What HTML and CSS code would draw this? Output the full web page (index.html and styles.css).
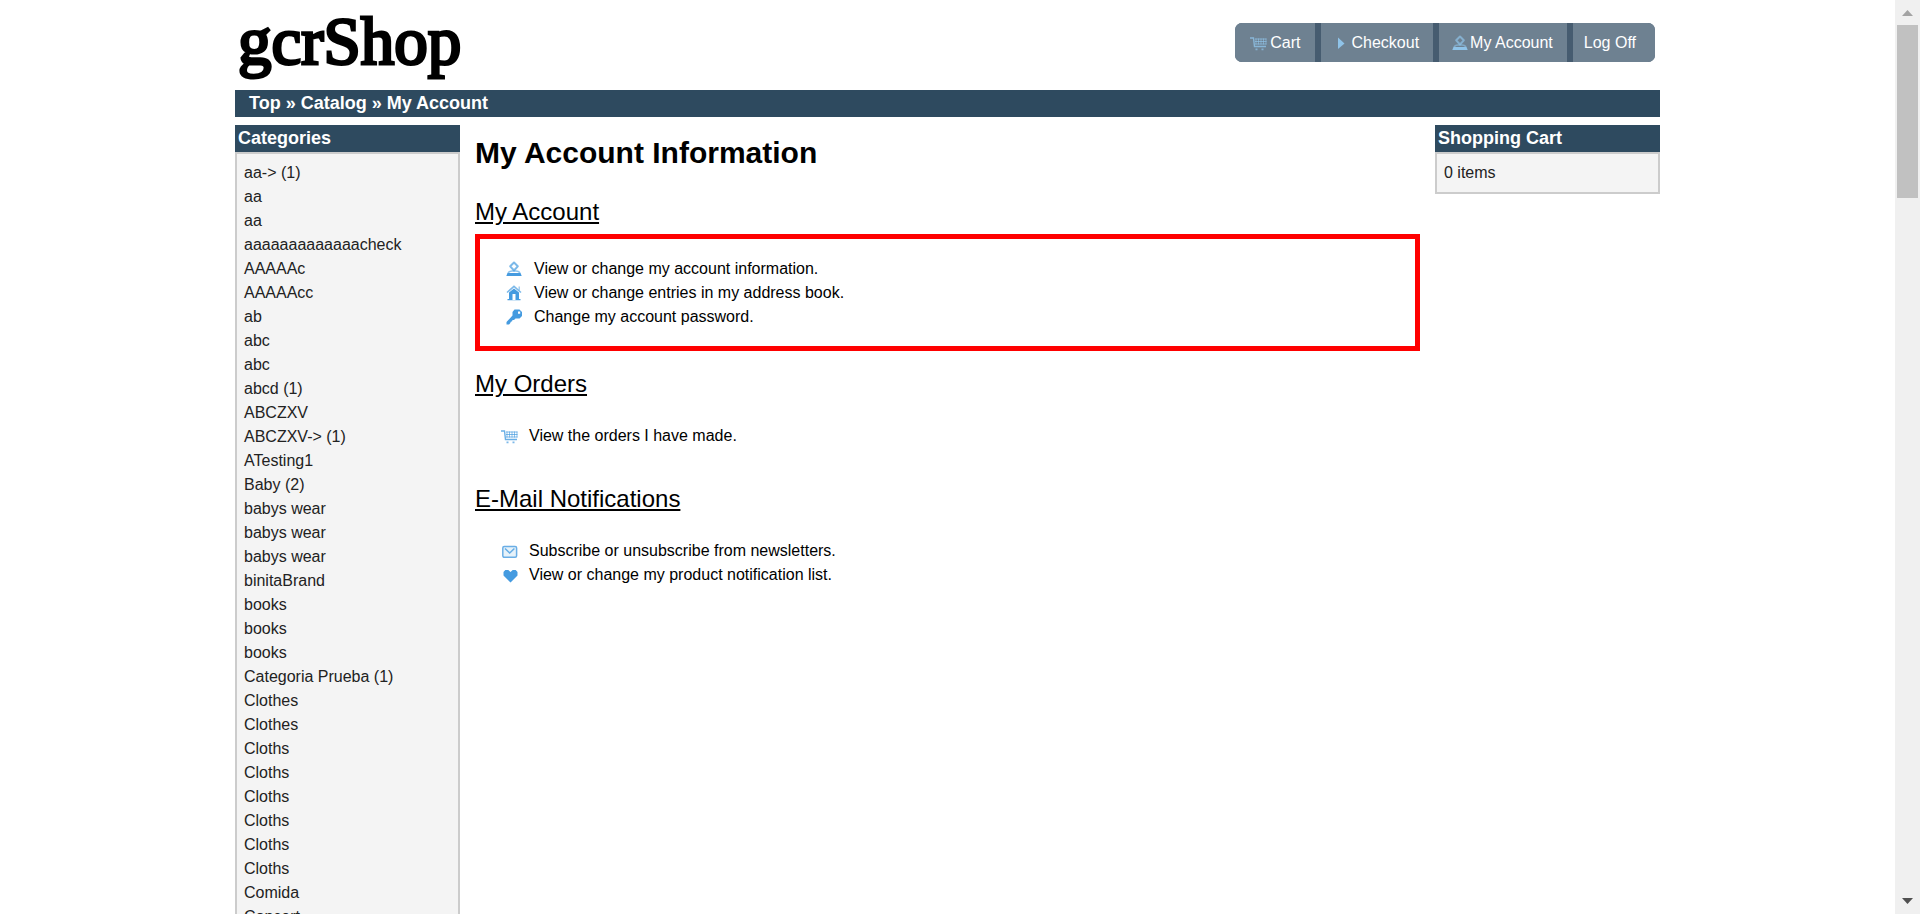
FILE: index.html
```
<!DOCTYPE html>
<html lang="en">
<head>
<meta charset="utf-8">
<title>gcrShop</title>
<link rel="stylesheet" href="styles.css">
</head>
<body>
<svg class="symbols" aria-hidden="true">
  <symbol id="user" viewBox="0 0 20 20">
    <path d="M10 3.500 13.800 7.300 10 11.500 6.200 7.300z" fill="none" stroke="currentColor" stroke-width="2" stroke-linejoin="round" opacity=".7"/>
    <path d="M4 14.500C4.500 12.500 6.500 12 8 12h4c1.500 0 3.500.5 4 2.500" fill="none" stroke="currentColor" stroke-width="1.500" opacity=".6"/>
    <path d="M3.500 14h13l1.200 3h-15.400z" fill="currentColor"/>
  </symbol>
  <symbol id="home" viewBox="0 0 20 20">
    <path d="M3 9.500 10 3.300l7 6.200" fill="none" stroke="currentColor" stroke-width="1.600" opacity=".7"/>
    <path d="M14.500 3.500h1.500v4l-1.500-1z" fill="currentColor" opacity=".5"/>
    <path d="M5 9.500 10 5.500l5 4V16h1.500v1.200H3.500V16H5zM8.500 11v6h3v-6z" fill="currentColor" fill-rule="evenodd"/>
  </symbol>
  <symbol id="key" viewBox="0 0 20 20">
    <path fill-rule="evenodd" d="M10.500 2.500h5L18 5v4l-2.500 2.500h-4l-1.500 1.500H8.500l-.5 1.500H7l-1 2-1 1H2.500V15l6-6.500V5zM14 4.500v2.200h2.200V4.500z" fill="currentColor"/>
  </symbol>
  <symbol id="cart" viewBox="0 0 20 20">
    <path d="M2 5h3.500l1 8.500h11.500" fill="none" stroke="currentColor" stroke-width="1.400" opacity=".8"/>
    <path d="M7 6h11.500M7 8.500h11.500M7 11h11.500" fill="none" stroke="currentColor" opacity=".7"/>
    <path d="M8 5.500v6M10.500 5.500v6M13 5.500v6M15.500 5.500v6M18 5.500v6" fill="none" stroke="currentColor" opacity=".6"/>
    <path d="M7.500 15.500h2v1.800h-2zM13.500 15.500h2v1.800h-2z" fill="currentColor" opacity=".7"/>
  </symbol>
  <symbol id="mail" viewBox="0 0 20 20">
    <rect x="3.800" y="5.500" width="13.800" height="10.800" rx="1.500" fill="#e1effa" stroke="currentColor" stroke-width="1.500" opacity=".8"/>
    <path d="M6 7.500 10.700 12 15.400 7.500" fill="none" stroke="currentColor" stroke-width="1.500" opacity=".8"/>
  </symbol>
  <symbol id="heart" viewBox="0 0 20 20">
    <path d="M11.500 17.500 4.500 10.500V7l1.800-2h3L11.500 7l2.200-2h3L18.500 7v3.500z" fill="currentColor"/>
  </symbol>
  <symbol id="play" viewBox="0 0 20 20">
    <path d="M6 4.500 12.500 10.500 6 16z" fill="currentColor"/>
  </symbol>
</svg>
<div class="page">
  <header class="header">
    <a class="logo" href="#">gcrShop</a>
    <nav class="toolbar" aria-label="Account">
      <a class="tool tool-first" href="#"><svg class="icon"><use href="#cart"/></svg>Cart</a>
      <a class="tool" href="#"><svg class="icon"><use href="#play"/></svg>Checkout</a>
      <a class="tool" href="#"><svg class="icon"><use href="#user"/></svg>My Account</a>
      <a class="tool tool-last" href="#">Log Off</a>
    </nav>
  </header>
  <nav class="breadcrumb" aria-label="Breadcrumb"><a href="#">Top</a> » <a href="#">Catalog</a> » <a href="#">My Account</a></nav>
  <div class="columns">
    <aside class="box">
      <h2 class="box-title">Categories</h2>
      <div class="box-body">
        <a href="#">aa-&gt; (1)</a>
        <a href="#">aa</a>
        <a href="#">aa</a>
        <a href="#">aaaaaaaaaaaaacheck</a>
        <a href="#">AAAAAc</a>
        <a href="#">AAAAAcc</a>
        <a href="#">ab</a>
        <a href="#">abc</a>
        <a href="#">abc</a>
        <a href="#">abcd (1)</a>
        <a href="#">ABCZXV</a>
        <a href="#">ABCZXV-&gt; (1)</a>
        <a href="#">ATesting1</a>
        <a href="#">Baby (2)</a>
        <a href="#">babys wear</a>
        <a href="#">babys wear</a>
        <a href="#">babys wear</a>
        <a href="#">binitaBrand</a>
        <a href="#">books</a>
        <a href="#">books</a>
        <a href="#">books</a>
        <a href="#">Categoria Prueba (1)</a>
        <a href="#">Clothes</a>
        <a href="#">Clothes</a>
        <a href="#">Cloths</a>
        <a href="#">Cloths</a>
        <a href="#">Cloths</a>
        <a href="#">Cloths</a>
        <a href="#">Cloths</a>
        <a href="#">Cloths</a>
        <a href="#">Comida</a>
        <a href="#">Concert</a>
      </div>
    </aside>
    <main class="content">
      <h1 class="title">My Account Information</h1>
      <h2 class="section-title">My Account</h2>
      <ul class="links highlighted">
        <li><svg class="icon"><use href="#user"/></svg><a href="#">View or change my account information.</a></li>
        <li><svg class="icon"><use href="#home"/></svg><a href="#">View or change entries in my address book.</a></li>
        <li><svg class="icon"><use href="#key"/></svg><a href="#">Change my account password.</a></li>
      </ul>
      <h2 class="section-title">My Orders</h2>
      <ul class="links">
        <li><svg class="icon"><use href="#cart"/></svg><a href="#">View the orders I have made.</a></li>
      </ul>
      <h2 class="section-title">E-Mail Notifications</h2>
      <ul class="links">
        <li><svg class="icon"><use href="#mail"/></svg><a href="#">Subscribe or unsubscribe from newsletters.</a></li>
        <li><svg class="icon"><use href="#heart"/></svg><a href="#">View or change my product notification list.</a></li>
      </ul>
    </main>
    <aside class="box">
      <h2 class="box-title">Shopping Cart</h2>
      <div class="box-body">0 items</div>
    </aside>
  </div>
</div>
<div class="scrollbar" aria-hidden="true">
  <svg class="arrow" viewBox="0 0 25 25"><path d="M7 16 12.500 10 18 16z" fill="#a3a3a3"/></svg>
  <div class="track"><div class="thumb"></div></div>
  <svg class="arrow" viewBox="0 0 25 25"><path d="M7 9 12.500 15 18 9z" fill="#505050"/></svg>
</div>
</body>
</html>
```
FILE: styles.css
```
* { box-sizing: border-box; }

body {
  margin: 0;
  height: 100vh;
  display: grid;
  grid-template-columns: 1fr 25px;
  overflow: hidden;
  background: #fff;
  color: #000;
  font: 16px/24px "Liberation Sans", Arial, sans-serif;
}

a { color: inherit; text-decoration: none; }
h1, h2, ul { margin: 0; padding: 0; }
.symbols { display: none; }
.icon { width: 20px; height: 20px; flex: none; color: #459be0; }

.page {
  min-width: 0;
  height: 100vh;
  overflow: hidden;
  padding: 0 235px;
}

.header {
  display: flex;
  justify-content: space-between;
  height: 90px;
  padding-right: 5px;
}

.logo {
  padding-left: 3px;
  font: 67px/82px "Liberation Serif", "Times New Roman", serif;
  -webkit-text-stroke: 3px #000;
}

.toolbar {
  display: flex;
  gap: 6px;
  height: 39px;
  margin-top: 23px;
  border-radius: 7px;
  overflow: hidden;
  background: #465c70;
}

.tool {
  display: flex;
  align-items: center;
  padding: 0 14px 0 11px;
  background: #6e8191;
  color: #fff;
}

.tool-first { gap: 2px; padding-left: 13px; }
.tool-last { padding-right: 19px; }
.tool .icon { color: #8fc3e8; }

.breadcrumb {
  padding: 0 14px;
  background: #2e4a5f;
  color: #fff;
  font-size: 18px;
  font-weight: bold;
  line-height: 27px;
}

.columns {
  display: grid;
  grid-template-columns: 225px 1fr 225px;
  gap: 15px;
  align-items: start;
  margin-top: 8px;
}

.box-title {
  padding: 0 3px;
  background: #2e4a5f;
  color: #fff;
  font-size: 18px;
  line-height: 27px;
}

.box-body {
  display: flex;
  flex-direction: column;
  padding: 7px;
  border: 2px solid #ccc;
  background: #f4f4f4;
  color: #222;
}

.title {
  padding: 9px 0 7px;
  font-size: 30px;
  line-height: 38px;
}

.section-title {
  margin-top: 18px;
  font-size: 24px;
  font-weight: normal;
  line-height: 30px;
  text-decoration: underline;
}

.links {
  list-style: none;
  padding: 25px 24px 18px;
}

.links li {
  display: flex;
  align-items: center;
  gap: 10px;
}

.highlighted {
  margin-top: 7px;
  padding: 18px 24px 17px;
  border: 5px solid #f00;
}

.scrollbar {
  display: flex;
  flex-direction: column;
  background: #f0f0f0;
}

.arrow { width: 25px; height: 25px; }
.track { flex: 1; padding: 0 2px; }
.thumb { height: 20%; background: #c1c1c1; }
```
